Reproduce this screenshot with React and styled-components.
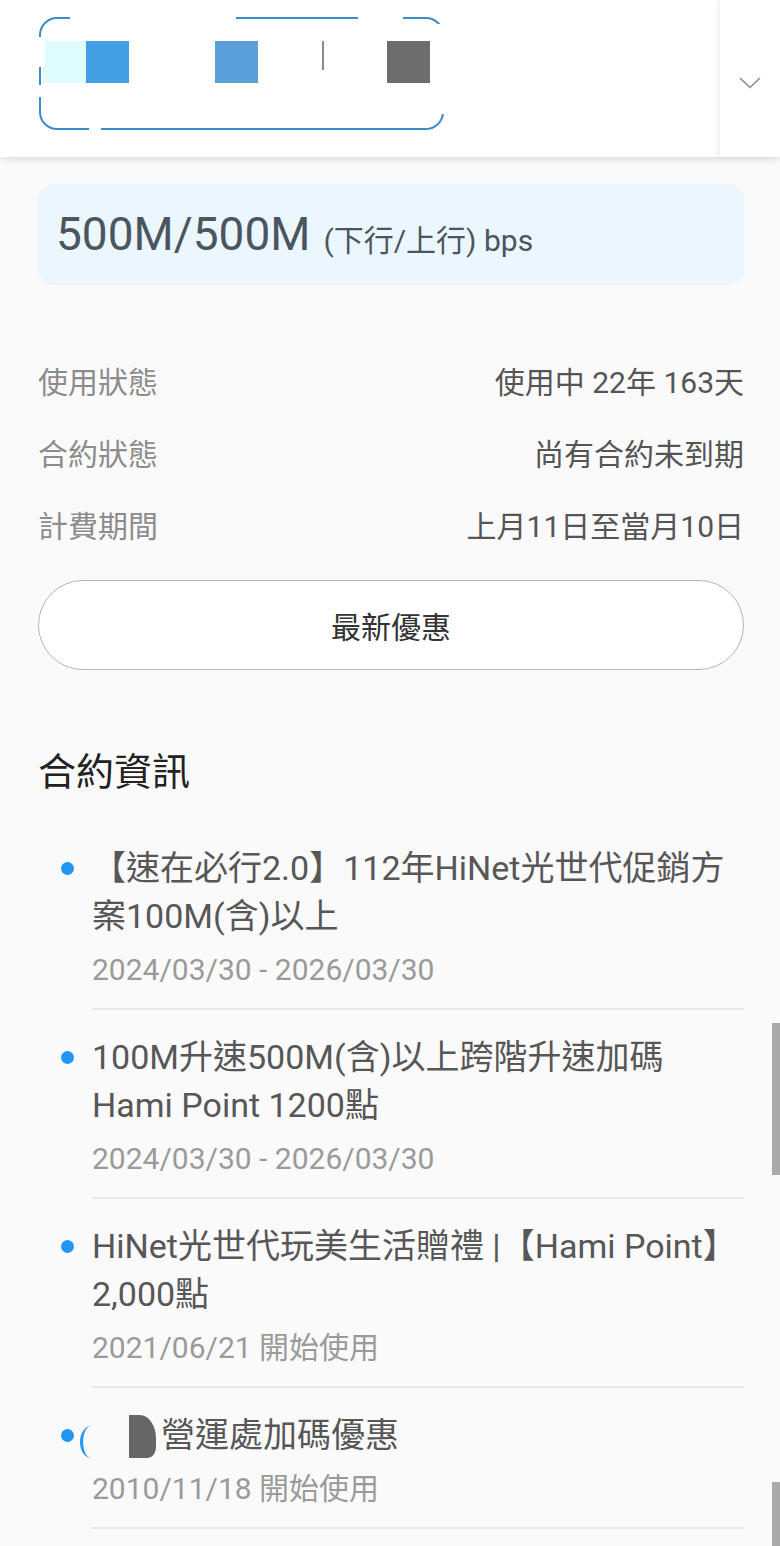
import styled, { createGlobalStyle } from "styled-components";

const Global = createGlobalStyle`
  html, body {
    margin: 0;
    padding: 0;
    background: #fafafa;
  }
  body {
    font-family: Roboto, "Noto Sans CJK TC", "Noto Sans", sans-serif;
  }
`;

const Page = styled.div`
  position: relative;
  width: 780px;
  min-height: 1546px;
  background: #fafafa;
  overflow: hidden;
`;

/* header */
const Header = styled.header`
  display: flex;
  height: 157px;
  background: #fff;
  box-shadow: 0 2px 8px rgba(0, 0, 0, 0.13);
  position: relative;
  z-index: 1;
`;

const HeaderMain = styled.div`
  flex: 1;
  padding: 17px 0 0 39px;
`;

const AccountCard = styled.div`
  position: relative;
  box-sizing: border-box;
  width: 405px;
  height: 113px;
  border: 2px solid #3d8cc7;
  border-radius: 18px;
  display: flex;
  align-items: flex-start;
  padding: 22px 0 0 2px;
`;

const Block = styled.span`
  flex: none;
  width: ${(p) => p.$w || 43}px;
  height: ${(p) => p.$h || 42}px;
  margin-left: ${(p) => p.$ml || 0}px;
  background: ${(p) => p.$c};
`;

const Mask = styled.span`
  position: absolute;
  background: #fff;
`;

const Dropdown = styled.div`
  width: 60px;
  display: flex;
  align-items: center;
  justify-content: center;
  box-shadow: -3px 0 4px rgba(0, 0, 0, 0.04);
  border-left: 1px solid #f3f3f3;
  padding-top: 8px;
`;

/* content */
const Content = styled.main`
  padding: 27px 36px 40px 38px;
`;

const SpeedCard = styled.div`
  height: 101px;
  box-sizing: border-box;
  border-radius: 16px;
  background: #ecf6fe;
  display: flex;
  align-items: center;
  padding: 0 0 2px 18px;
  color: #4a5560;
`;

const SpeedBig = styled.span`
  font-size: 46px;
`;

const SpeedSmall = styled.span`
  font-size: 30px;
  margin-left: 13px;
  margin-top: 8px;
`;

const InfoRows = styled.div`
  margin-top: 59px;
`;

const Row = styled.div`
  height: 72px;
  display: flex;
  align-items: center;
  justify-content: space-between;
  font-size: 30px;
`;

const Label = styled.span`
  color: #8c8c8c;
`;

const Value = styled.span`
  color: #555;
`;

const PromoButton = styled.button`
  display: block;
  width: 100%;
  height: 90px;
  margin-top: 20px;
  border: 1.5px solid #b4b4b4;
  border-radius: 45px;
  background: #fff;
  font-family: inherit;
  font-size: 30px;
  color: #333;
`;

const SectionTitle = styled.h2`
  margin: 77px 0 0;
  font-size: 38px;
  font-weight: 400;
  line-height: 50px;
  color: #222;
`;

const List = styled.ul`
  list-style: none;
  margin: 24px 0 0;
  padding: 0;
`;

const Item = styled.li`
  position: relative;
  display: flex;
`;

const DotCol = styled.div`
  width: 54px;
  flex: none;
  padding-top: 41px;
`;

const Dot = styled.span`
  display: block;
  width: 13px;
  height: 13px;
  margin-left: 23px;
  border-radius: 50%;
  background: #2196f3;
`;

const Body = styled.div`
  flex: 1;
  padding: 23px 6px 16px 0;
  border-bottom: 2px solid #e8e8e8;
`;

const ItemTitle = styled.div`
  font-size: 34px;
  line-height: 48px;
  color: #575757;
`;

const ItemDate = styled.div`
  margin-top: 8px;
  font-size: 30px;
  line-height: 44px;
  color: #9a9a9a;
`;

const Arc = styled.span`
  position: absolute;
  left: 42px;
  top: 38px;
  width: 22px;
  height: 32px;
  border-left: 3px solid #2196f3;
  border-radius: 50%;
  box-sizing: border-box;
`;

const Blob = styled.span`
  display: inline-block;
  vertical-align: middle;
  width: 27px;
  height: 43px;
  margin: -4px 5px 0 37px;
  background: #666;
  border-radius: 0 60% 30% 0 / 0 55% 25% 0;
`;

const Scroll = styled.span`
  position: absolute;
  right: 0;
  width: 8px;
  background: #aaa;
  top: ${(p) => p.$top}px;
  height: ${(p) => p.$h}px;
`;

const items = [
  {
    title: "【速在必行2.0】112年HiNet光世代促銷方案100M(含)以上",
    date: "2024/03/30 - 2026/03/30",
  },
  {
    title: "100M升速500M(含)以上跨階升速加碼Hami Point 1200點",
    date: "2024/03/30 - 2026/03/30",
  },
  {
    title: "HiNet光世代玩美生活贈禮 |【Hami Point】2,000點",
    date: "2021/06/21 開始使用",
  },
  {
    title: "營運處加碼優惠",
    date: "2010/11/18 開始使用",
    redacted: true,
  },
];

export default function App() {
  return (
    <Page>
      <Global />
      <Header>
        <HeaderMain>
          <AccountCard>
            <Block $c="#dffcff" />
            <Block $c="#459fe3" />
            <Block $c="#5b9fd8" $ml={86} />
            <Block $c="#8a8a8a" $w={1.5} $h={29} $ml={64} />
            <Block $c="#6d6d6d" $ml={63} />
            <Mask style={{ left: 29, top: -3, width: 166, height: 7 }} />
            <Mask style={{ left: 317, top: -3, width: 45, height: 7 }} />
            <Mask style={{ right: -3, top: 5, width: 7, height: 90 }} />
            <Mask style={{ left: -3, top: 18, width: 7, height: 30 }} />
            <Mask style={{ left: -3, top: 66, width: 7, height: 12 }} />
            <Mask style={{ left: 48, bottom: -3, width: 12, height: 7 }} />
          </AccountCard>
        </HeaderMain>
        <Dropdown>
          <svg width="22" height="12" viewBox="0 0 22 12">
            <path d="M1 1l10 9.5L21 1" fill="none" stroke="#8a8a8a" strokeWidth="1.6" />
          </svg>
        </Dropdown>
      </Header>

      <Content>
        <SpeedCard>
          <SpeedBig>500M/500M</SpeedBig>
          <SpeedSmall>(下行/上行) bps</SpeedSmall>
        </SpeedCard>

        <InfoRows>
          <Row>
            <Label>使用狀態</Label>
            <Value>使用中 22年 163天</Value>
          </Row>
          <Row>
            <Label>合約狀態</Label>
            <Value>尚有合約未到期</Value>
          </Row>
          <Row>
            <Label>計費期間</Label>
            <Value>上月11日至當月10日</Value>
          </Row>
        </InfoRows>

        <PromoButton>最新優惠</PromoButton>

        <SectionTitle>合約資訊</SectionTitle>
        <List>
          {items.map((it) => (
            <Item key={it.title}>
              <DotCol>
                <Dot />
              </DotCol>
              {it.redacted && <Arc />}
              <Body>
                <ItemTitle>
                  {it.redacted && <Blob />}
                  {it.title}
                </ItemTitle>
                <ItemDate>{it.date}</ItemDate>
              </Body>
            </Item>
          ))}
        </List>
      </Content>

      <Scroll $top={1023} $h={152} />
      <Scroll $top={1482} $h={64} />
    </Page>
  );
}
